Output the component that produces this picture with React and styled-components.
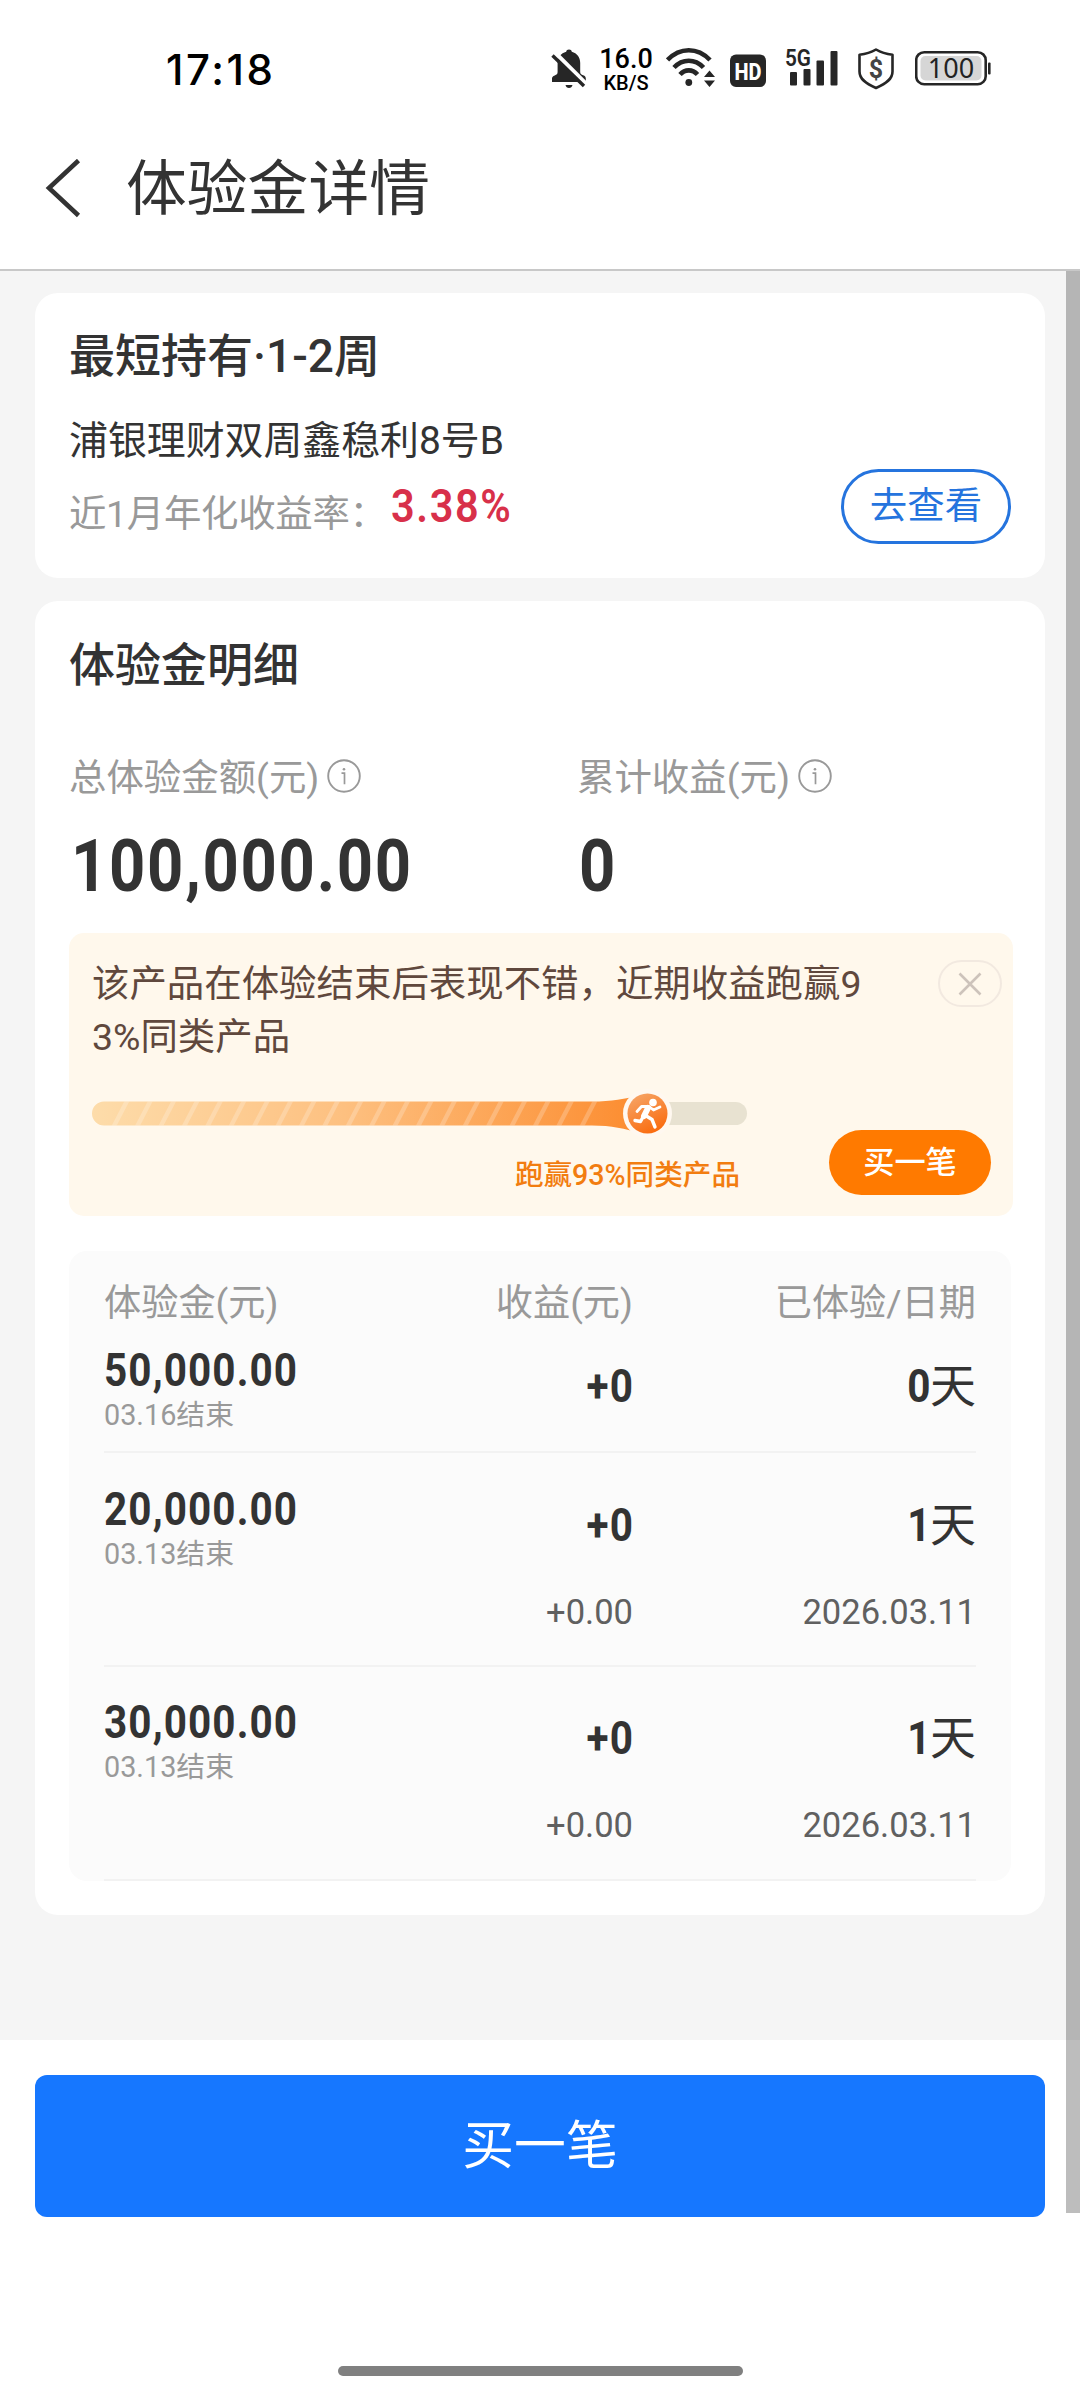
import React from "react";
import styled, { createGlobalStyle } from "styled-components";

const GlobalStyle = createGlobalStyle`
  * {
    box-sizing: border-box;
  }
  body {
    margin: 0;
    background: #fff;
    font-family: Roboto, "Noto Sans CJK SC", sans-serif;
    color: #333;
  }
`;

const Page = styled.div`
  position: relative;
  display: flex;
  flex-direction: column;
  width: 1080px;
  height: 2400px;
  background: #fff;
  overflow: hidden;
`;

// status bar
const StatusBar = styled.div`
  display: flex;
  align-items: flex-start;
  justify-content: space-between;
  height: 104px;
  padding: 44px 89px 0 166px;
`;
const Clock = styled.div`
  font-family: Inter, sans-serif;
  font-size: 42px;
  font-weight: 500;
  line-height: 51px;
  letter-spacing: 2.6px;
  color: #000;
`;
const StatusIcons = styled.div`
  display: flex;
  align-items: flex-start;
  svg {
    display: block;
  }
`;
const NetSpeed = styled.div`
  display: flex;
  flex-direction: column;
  align-items: center;
  width: 54px;
  margin: 2px 13px 0 12px;
  font-weight: 500;
  color: #000;
`;
const SpeedValue = styled.span`
  font-size: 27px;
  line-height: 27px;
`;
const SpeedUnit = styled.span`
  font-size: 20px;
  line-height: 20px;
`;

// header
const Header = styled.header`
  display: flex;
  align-items: center;
  height: 167px;
  padding: 4px 0 0 44px;
  border-bottom: 2px solid #c8c8c8;
`;
const Title = styled.h1`
  margin: 2px 0 0 42px;
  font-size: 60.8px;
  font-weight: 400;
  line-height: 72px;
`;

// content
const Content = styled.main`
  display: flex;
  flex-direction: column;
  gap: 23px;
  height: 1769px;
  padding: 22px 35px 0;
  background: #f5f5f5;
`;
const Card = styled.section`
  padding: ${(p) => p.$pad};
  height: ${(p) => p.$height}px;
  border-radius: 23px;
  background: #fff;
`;
const CardTitle = styled.h2`
  margin: 0;
  font-size: 46px;
  font-weight: 500;
  line-height: 60px;
`;
const ProductCard = styled(Card)`
  display: flex;
  justify-content: space-between;
  align-items: flex-end;
`;
const ProductInfo = styled.div`
  align-self: flex-start;
`;
const ProductName = styled.div`
  margin-top: 30px;
  font-size: 38.9px;
  line-height: 50px;
`;
const RateRow = styled.div`
  display: flex;
  margin-top: 15px;
`;
const RateLabel = styled.span`
  width: 322px;
  padding-top: 8px;
  font-size: 37.44px;
  line-height: 50px;
  letter-spacing: -0.3px;
  color: #999;
`;
// narrow figures with a little extra tracking
const Numeric = styled.span`
  display: inline-block;
  font-size: ${(p) => p.$size || 46}px;
  font-weight: 700;
  line-height: ${(p) => p.$line || 46}px;
  letter-spacing: 0.027em;
  margin-right: ${(p) => (p.$origin === "right" ? "-0.027em" : 0)};
  transform: scaleX(0.88);
  transform-origin: ${(p) => p.$origin || "left"} center;
`;
const Rate = styled(Numeric)`
  font-weight: 600;
  letter-spacing: 0.04em;
  transform: scaleX(0.9);
  color: #d8304a;
`;
const ViewButton = styled.button`
  width: 170px;
  height: 75px;
  padding: 0;
  border: 3px solid #2574de;
  border-radius: 38px;
  background: #fff;
  font-family: inherit;
  font-size: 37.44px;
  line-height: 69px;
  color: #2574de;
`;

const Totals = styled.div`
  display: flex;
  margin-top: 57px;
`;
const Total = styled.div`
  flex: none;
  width: ${(p) => p.$width}px;
`;
const TotalLabel = styled.div`
  display: flex;
  align-items: center;
  gap: 8px;
  font-size: 37.44px;
  line-height: 52px;
  color: #999;
  svg {
    margin-top: -4px;
  }
`;
const TotalValue = styled.div`
  height: 80px;
  margin: 23px 0 0 2px;
`;

// notice
const Notice = styled.div`
  width: 944px;
  height: 283px;
  margin-top: 26px;
  padding: 25px 11px 0 23px;
  border-radius: 15px;
  background: #fff8ec;
`;
const NoticeTop = styled.div`
  display: flex;
  align-items: flex-start;
  justify-content: space-between;
  height: 131px;
`;
const NoticeText = styled.p`
  width: 775px;
  margin: 0;
  font-size: 37.44px;
  line-height: 53px;
  word-break: break-all;
  color: #60483d;
`;
const NoticeBottom = styled.div`
  display: flex;
  align-items: flex-end;
  justify-content: space-between;
  height: 106px;
  padding-right: 11px;
`;
const NoticeLabel = styled.div`
  width: 648px;
  margin-top: 16px;
  font-size: 28.6px;
  font-weight: 500;
  line-height: 40px;
  text-align: right;
  color: #f27d10;
`;
const CloseButton = styled.button`
  display: flex;
  align-items: center;
  justify-content: center;
  width: 64px;
  height: 47px;
  margin-top: 2px;
  padding: 0;
  border: 2px solid #f2e9e0;
  border-radius: 24px;
  background: transparent;
`;
const SmallBuy = styled.button`
  width: 162px;
  height: 65px;
  padding: 0;
  border: 0;
  border-radius: 33px;
  background: #ff7a00;
  font-family: inherit;
  font-size: 31.2px;
  font-weight: 500;
  line-height: 65px;
  color: #fff;
`;

// table
const Table = styled.div`
  width: 942px;
  height: 630px;
  margin-top: 35px;
  padding: 26px 35px 0;
  border-radius: 18px;
  background: #fbfbfb;
`;
const Columns = styled.div`
  display: grid;
  grid-template-columns: 1fr 200px 343px;
`;
const HeadCell = styled.div`
  font-size: 37.2px;
  line-height: 52px;
  text-align: ${(p) => p.$align || "left"};
  color: #999;
  white-space: nowrap;
`;
const Row = styled.div`
  height: ${(p) => p.$height}px;
  padding-top: ${(p) => p.$top}px;
  border-bottom: 2px solid #f2f2f2;
`;
const AmountCell = styled.div`
  display: flex;
  flex-direction: column;
  height: 88px;
`;
const EndDate = styled.span`
  font-size: 28.8px;
  line-height: 44px;
  color: #999;
`;
const ValueCell = styled.div`
  padding-top: 16px;
  font-size: 46px;
  line-height: 46px;
  text-align: right;
`;
const SubCell = styled.div`
  margin-top: 18px;
  font-size: 34.56px;
  line-height: 41px;
  text-align: right;
  color: #606060;
`;

// footer
const Footer = styled.footer`
  flex: 1;
  display: flex;
  flex-direction: column;
  justify-content: space-between;
  align-items: center;
  padding: 35px 35px 24px;
`;
const BuyButton = styled.button`
  width: 1010px;
  height: 142px;
  padding: 2px 0 0;
  border: 0;
  border-radius: 12px;
  background: #1677ff;
  font-family: inherit;
  font-size: 51.84px;
  line-height: 140px;
  color: #fff;
`;
const HomeBar = styled.div`
  width: 405px;
  height: 10px;
  border-radius: 5px;
  background: #808080;
`;
// floats above the content and the footer
const ScrollThumb = styled.div`
  position: absolute;
  top: 271px;
  right: 0;
  width: 14px;
  height: 1942px;
  background: rgba(0, 0, 0, 0.26);
`;

const rows = [
  { amount: "50,000.00", end: "03.16结束", days: "0", top: 18, height: 124 },
  {
    amount: "20,000.00",
    end: "03.13结束",
    days: "1",
    date: "2026.03.11",
    top: 33,
    height: 214,
  },
  {
    amount: "30,000.00",
    end: "03.13结束",
    days: "1",
    date: "2026.03.11",
    top: 32,
    height: 214,
  },
];

const BellOff = () => (
  <svg width="36" height="46" viewBox="0 0 36 46" fill="#262626">
    <path d="M18 5.500c1.600 0 2.600 .8 2.800 2.200 5.200 1.400 8.400 5.500 8.400 11v9.300c0 1.800 1 2.700 3 3.300 1.800 .6 2.600 1.800 2.600 3.300v3.400H1v-3.400c0-1.700 1-2.700 2.700-3.200 2-.6 2.900-1.600 2.900-3.400v-9.300c0-5.500 3.400-9.600 8.600-11 .2-1.400 1.200-2.200 2.800-2.200z" />
    <path d="M14.500 41h7c-.4 2-1.700 3-3.500 3s-3.100-1-3.500-3z" />
    <path d="M4 8.500L36 40.500" stroke="#fff" strokeWidth="4" />
    <path d="M1.500 11.500L33 42" stroke="#262626" strokeWidth="3.400" />
  </svg>
);

const Wifi = () => (
  <svg width="50" height="44" viewBox="0 0 50 44" fill="none" stroke="#262626">
    <path d="M1.500 16C14 3 31.500 3 44 16" strokeWidth="4.600" />
    <path d="M8 23.500C16.500 14.500 29 14.500 37.500 23.500" strokeWidth="4.600" />
    <path d="M14 30.500C19 25 26.500 25 31.500 30.500" strokeWidth="4.600" />
    <circle cx="22.800" cy="38.500" r="3.400" fill="#262626" stroke="none" />
    <path d="M38 33l5.500-6.500 5.500 6.500zM38 36.500h11L43.500 43z" fill="#262626" stroke="none" />
  </svg>
);

const Hd = () => (
  <svg width="36" height="50" viewBox="0 0 36 50">
    <rect x="0" y="10.500" width="36" height="32.500" rx="6" fill="#262626" />
    <text
      x="4.500"
      y="35.500"
      fontFamily="Roboto"
      fontSize="24.500"
      fontWeight="800"
      textLength="27"
      lengthAdjust="spacingAndGlyphs"
      fill="#fff"
    >
      HD
    </text>
  </svg>
);

const Signal = () => (
  <svg width="54" height="44" viewBox="0 0 54 44" fill="#262626">
    <text
      x="0"
      y="22"
      fontFamily="Roboto"
      fontSize="24"
      fontWeight="600"
      textLength="26"
      lengthAdjust="spacingAndGlyphs"
    >
      5G
    </text>
    <rect x="5" y="28" width="7" height="13.500" rx="1" />
    <rect x="18.500" y="25" width="7" height="16.500" rx="1" />
    <rect x="31.500" y="16.500" width="7.500" height="25" rx="1" />
    <rect x="45.500" y="7" width="7" height="34.500" rx="1" />
  </svg>
);

const Shield = () => (
  <svg width="38" height="46" viewBox="0 0 38 46">
    <path
      d="M19 5.500c5 3 10 4.500 16.500 5.200v16.800c0 7.500-6 12-16.500 16.500C8.500 39.500 2.500 35 2.500 27.500V10.700C9 10 14 8.500 19 5.500z"
      fill="none"
      stroke="#262626"
      strokeWidth="2.600"
      strokeLinejoin="round"
    />
    <text
      x="19"
      y="33.500"
      textAnchor="middle"
      fontFamily="Roboto"
      fontSize="25"
      fontWeight="700"
      fill="#444"
    >
      $
    </text>
  </svg>
);

const Battery = () => (
  <svg width="76" height="44" viewBox="0 0 76 44">
    <rect x="1.200" y="8.200" width="69.500" height="32" rx="8" fill="#fff" stroke="#262626" strokeWidth="2.600" />
    <rect x="5.500" y="12" width="61" height="24.500" rx="5" fill="#d6d6d6" />
    <rect x="73" y="18.500" width="2.600" height="12" rx="1" fill="#262626" />
    <text
      x="36"
      y="34"
      textAnchor="middle"
      fontFamily="Noto Sans"
      fontSize="27"
      fill="#222"
    >
      100
    </text>
  </svg>
);

const IconGap = styled.div`
  width: ${(p) => p.$w}px;
`;

const BackIcon = () => (
  <svg width="40" height="60" viewBox="0 0 40 60">
    <path
      d="M34.500 1.500L5 29L34.500 56.500"
      fill="none"
      stroke="#333"
      strokeWidth="4.600"
    />
  </svg>
);

const InfoIcon = () => (
  <svg width="34" height="34" viewBox="0 0 34 34" fill="none" stroke="#999">
    <circle cx="17" cy="17" r="15.800" strokeWidth="1.900" />
    <path d="M14.500 14.200h3v11" strokeWidth="1.700" />
    <circle cx="17" cy="10.300" r="1.300" fill="#999" stroke="none" />
  </svg>
);

const stripes = Array.from({ length: 21 }, (_, i) => 19.5 + i * 23.4);

const ProgressBar = () => (
  <svg width="656" height="50" viewBox="0 0 656 50" display="block">
    <defs>
      <linearGradient id="fill" x1="0" x2="1">
        <stop offset="0" stopColor="#fddcaa" />
        <stop offset="0.450" stopColor="#fdc080" />
        <stop offset="1" stopColor="#fc8a2c" />
      </linearGradient>
      <linearGradient id="ball" x1="0.200" x2="0.700" y1="0" y2="1">
        <stop offset="0" stopColor="#f6a466" />
        <stop offset="1" stopColor="#fa6a0c" />
      </linearGradient>
      <clipPath id="clip">
        <path d="M12 12.500H500C520 12.500 532 10 550 6V44C532 40 520 36.500 500 36.500H12A12 12 0 0 1 12 12.500z" />
      </clipPath>
    </defs>
    <rect x="500" y="13" width="155" height="23" rx="11.500" fill="#e8e2d1" />
    <g clipPath="url(#clip)">
      <rect width="560" height="50" fill="url(#fill)" />
      {stripes.map((x) => (
        <path
          key={x}
          d={`M${x + 13} 12h5L${x + 5} 37h-5z`}
          fill="#fff"
          opacity="0.220"
        />
      ))}
    </g>
    <circle cx="555.500" cy="24.500" r="24.500" fill="#fff8f0" />
    <circle cx="555.500" cy="24.500" r="20" fill="url(#ball)" />
    <circle cx="561" cy="13.500" r="3.800" fill="#fff" />
    <g fill="none" stroke="#fff" strokeLinecap="round" strokeLinejoin="round">
      <path d="M556 19L552 27" strokeWidth="6" />
      <path d="M545 22.500L549.500 17.500L557 17.500L561.500 21L568 18" strokeWidth="2.800" />
      <path d="M553.500 26.500L560 30.500L563 38" strokeWidth="3.400" />
      <path d="M551 28L548.500 32.500L543 31.500" strokeWidth="3.400" />
    </g>
  </svg>
);

const CloseIcon = () => (
  <svg width="24" height="24" viewBox="0 0 24 24">
    <path d="M1.500 1.500L22.500 22.500M22.500 1.500L1.500 22.500" stroke="#cdc3bb" strokeWidth="2.600" />
  </svg>
);

export default () => {
  return (
    <Page>
      <GlobalStyle />
      <StatusBar>
        <Clock>17:18</Clock>
        <StatusIcons>
          <BellOff />
          <NetSpeed>
            <SpeedValue>16.0</SpeedValue>
            <SpeedUnit>KB/S</SpeedUnit>
          </NetSpeed>
          <Wifi />
          <IconGap $w={14} />
          <Hd />
          <IconGap $w={19} />
          <Signal />
          <IconGap $w={18} />
          <Shield />
          <IconGap $w={20} />
          <Battery />
        </StatusIcons>
      </StatusBar>
      <Header>
        <BackIcon />
        <Title>体验金详情</Title>
      </Header>
      <Content>
        <ProductCard $pad="33px 34px 34px 34px" $height={285}>
          <ProductInfo>
            <CardTitle>最短持有·1-2周</CardTitle>
            <ProductName>浦银理财双周鑫稳利8号B</ProductName>
            <RateRow>
              <RateLabel>近1月年化收益率：</RateLabel>
              <Rate $line={51}>3.38%</Rate>
            </RateRow>
          </ProductInfo>
          <ViewButton>去查看</ViewButton>
        </ProductCard>
        <Card $pad="34px 31px 0 34px" $height={1314}>
          <CardTitle>体验金明细</CardTitle>
          <Totals>
            <Total $width={508}>
              <TotalLabel>
                总体验金额(元)
                <InfoIcon />
              </TotalLabel>
              <TotalValue>
                <Numeric $size={72} $line={80}>
                  100,000.00
                </Numeric>
              </TotalValue>
            </Total>
            <Total $width={400}>
              <TotalLabel>
                累计收益(元)
                <InfoIcon />
              </TotalLabel>
              <TotalValue>
                <Numeric $size={72} $line={80}>
                  0
                </Numeric>
              </TotalValue>
            </Total>
          </Totals>
          <Notice>
            <NoticeTop>
              <NoticeText>
                该产品在体验结束后表现不错，近期收益跑赢93%同类产品
              </NoticeText>
              <CloseButton>
                <CloseIcon />
              </CloseButton>
            </NoticeTop>
            <NoticeBottom>
              <div>
                <ProgressBar />
                <NoticeLabel>跑赢93%同类产品</NoticeLabel>
              </div>
              <SmallBuy>买一笔</SmallBuy>
            </NoticeBottom>
          </Notice>
          <Table>
            <Columns>
              <HeadCell>体验金(元)</HeadCell>
              <HeadCell $align="right">收益(元)</HeadCell>
              <HeadCell $align="right">已体验/日期</HeadCell>
            </Columns>
            {rows.map((r) => (
              <Row key={r.amount} $top={r.top} $height={r.height}>
                <Columns>
                  <AmountCell>
                    <Numeric>{r.amount}</Numeric>
                    <EndDate>{r.end}</EndDate>
                  </AmountCell>
                  <ValueCell>
                    <Numeric $origin="right">+0</Numeric>
                  </ValueCell>
                  <ValueCell>
                    <Numeric $origin="right">{r.days}</Numeric>天
                  </ValueCell>
                </Columns>
                {r.date && (
                  <Columns>
                    <span />
                    <SubCell>+0.00</SubCell>
                    <SubCell>{r.date}</SubCell>
                  </Columns>
                )}
              </Row>
            ))}
          </Table>
        </Card>
      </Content>
      <Footer>
        <BuyButton>买一笔</BuyButton>
        <HomeBar />
      </Footer>
      <ScrollThumb />
    </Page>
  );
};
